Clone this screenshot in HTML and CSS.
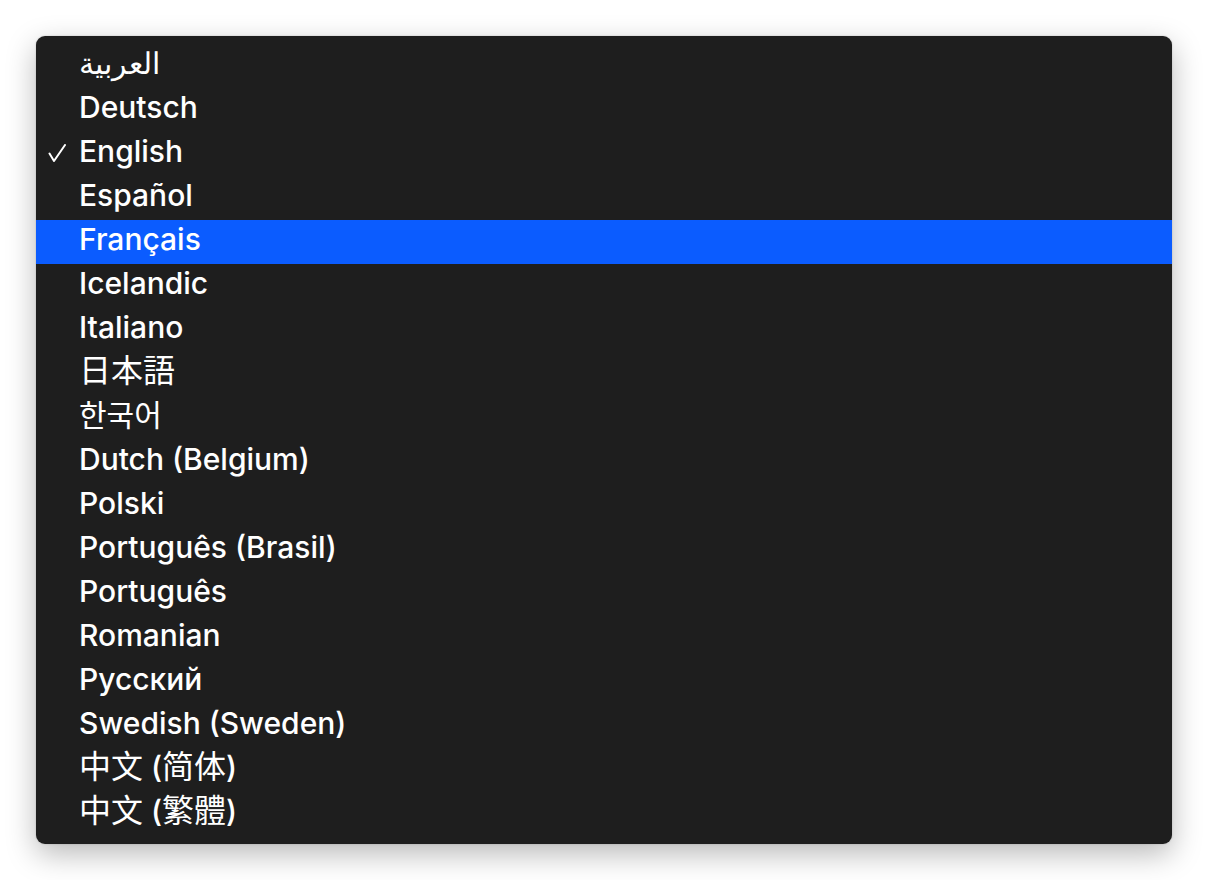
FILE: index.html
```html
<!DOCTYPE html>
<html>
<head>
<meta charset="utf-8">
<link rel="stylesheet" href="styles.css">
</head>
<body>
<div class="menu">
  <div class="item"><span class="arabic" dir="rtl">العربية</span></div>
  <div class="item">Deutsch</div>
  <div class="item"><span class="check"><svg width="18" height="18" viewBox="0 0 18 18"><polyline points="1.5,9.5 6,17 17,1" fill="none" stroke="#fff" stroke-width="2" stroke-linecap="round" stroke-linejoin="round"/></svg></span>English</div>
  <div class="item">Español</div>
  <div class="item selected">Français</div>
  <div class="item">Icelandic</div>
  <div class="item">Italiano</div>
  <div class="item"><span class="cjk cjk-jp">日本語</span></div>
  <div class="item"><span class="cjk cjk-kr">한국어</span></div>
  <div class="item">Dutch (Belgium)</div>
  <div class="item">Polski</div>
  <div class="item">Português (Brasil)</div>
  <div class="item">Português</div>
  <div class="item">Romanian</div>
  <div class="item">Русский</div>
  <div class="item">Swedish (Sweden)</div>
  <div class="item"><span class="cjk cjk-sc">中文</span> (<span class="cjk cjk-sc">简体</span>)</div>
  <div class="item"><span class="cjk cjk-tc">中文</span> (<span class="cjk cjk-tc">繁體</span>)</div>
</div>
</body>
</html>
```
FILE: styles.css
```css
html, body {
  margin: 0;
  padding: 0;
  background: #ffffff;
}
body {
  padding: 36px;
  font-family: Inter, "Noto Sans", sans-serif;
}
.menu {
  width: 1136px;
  height: 808px;
  box-sizing: border-box;
  padding: 8px 0;
  background: #1e1e1e;
  border-radius: 9px;
  box-shadow: 0 10px 30px rgba(0, 0, 0, 0.28), 0 0 2px rgba(0, 0, 0, 0.2);
  display: flex;
  flex-direction: column;
}
.item {
  height: 44px;
  box-sizing: border-box;
  position: relative;
  padding: 0 0 6px 43px;
  color: #ffffff;
  font-size: 30px;
  font-weight: 500;
  line-height: 38px;
  white-space: nowrap;
}
.item.selected {
  background: #0b5cff;
}
.arabic {
  font-size: 30px;
  line-height: 30px;
}
.check {
  position: absolute;
  left: 12px;
  top: 12px;
  width: 18px;
  height: 18px;
  display: block;
}
.check svg { display: block; }
.cjk {
  font-weight: 400;
  font-size: 32px;
  line-height: 30px;
}
.cjk-jp { font-family: "Noto Sans CJK JP", sans-serif; }
.cjk-kr { font-family: "Noto Sans CJK KR", sans-serif; font-size: 30px; }
.cjk-sc { font-family: "Noto Sans CJK SC", sans-serif; }
.cjk-tc { font-family: "Noto Sans CJK TC", sans-serif; }
```
